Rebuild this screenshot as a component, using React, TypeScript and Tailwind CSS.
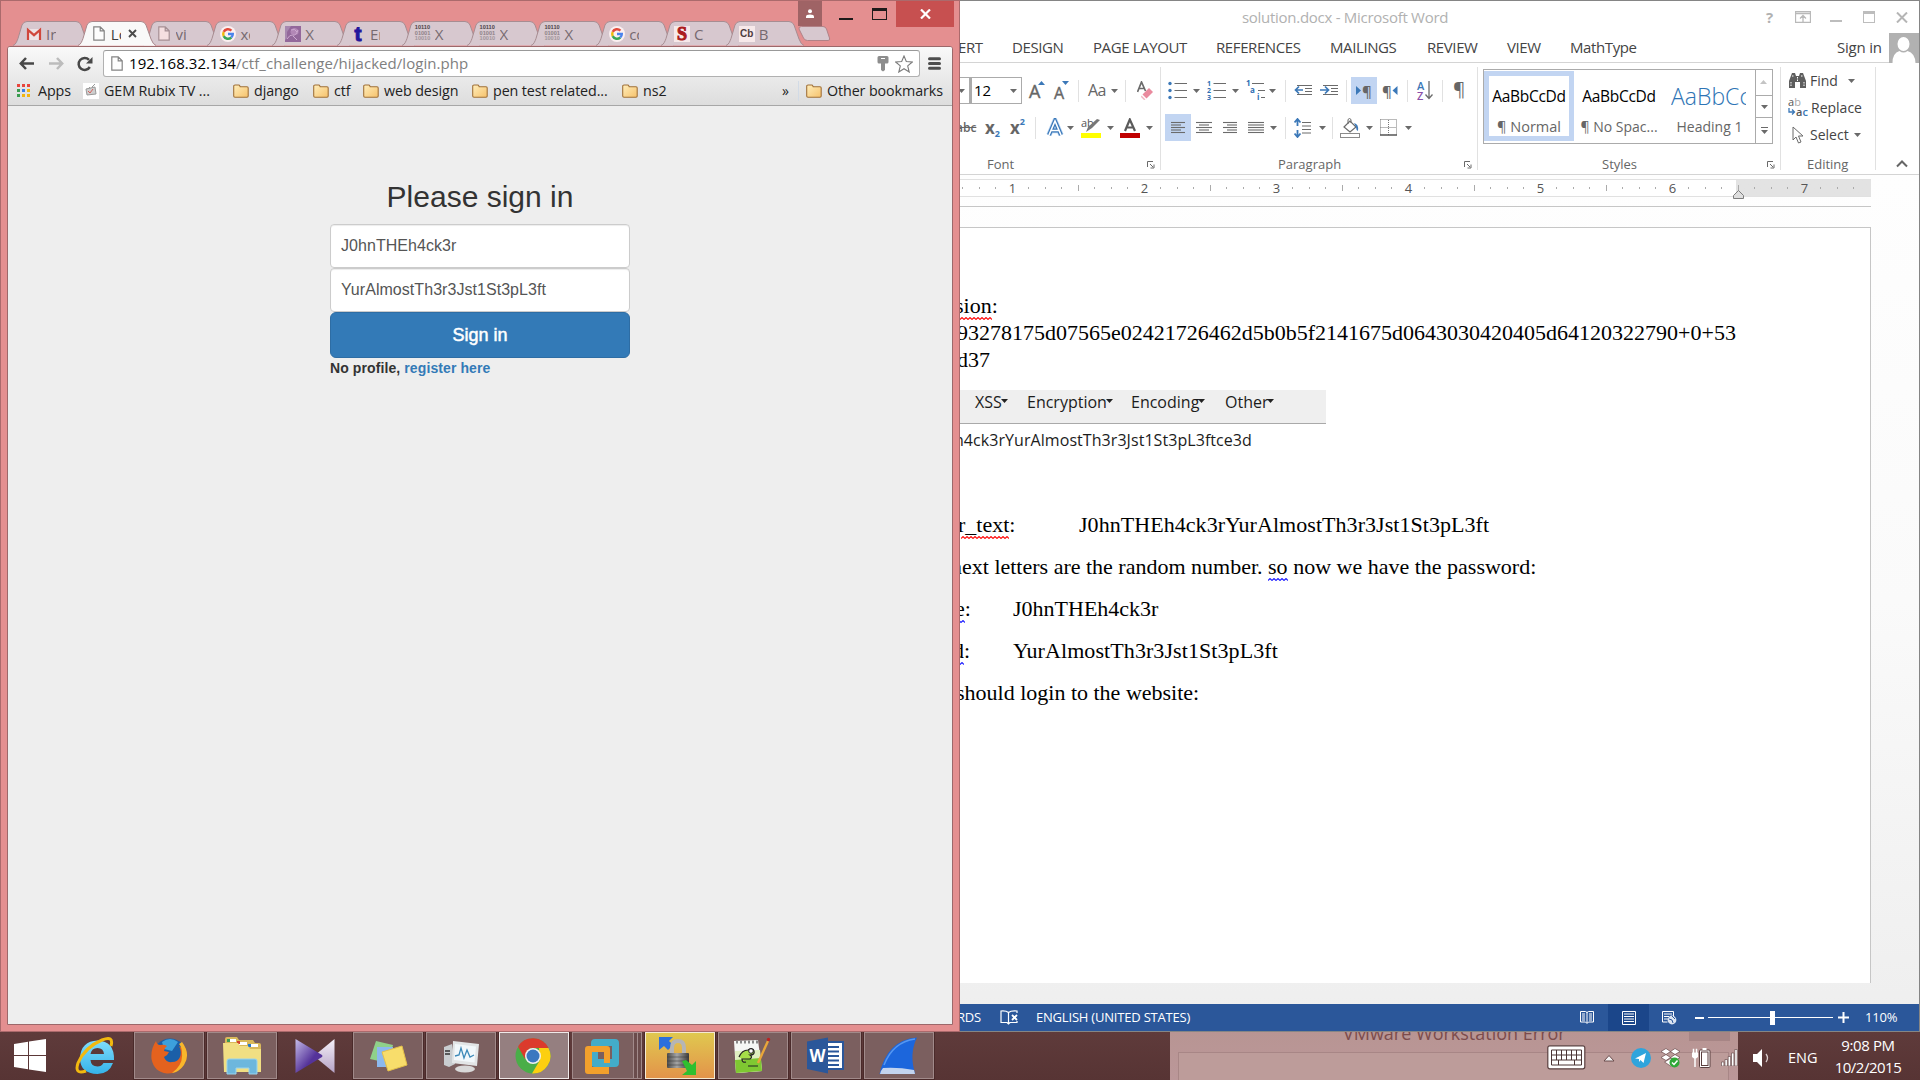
import React from "react";

type Kids = { children?: React.ReactNode };

const Folder = () => (
  <svg width="16" height="14" viewBox="0 0 16 14">
    <defs>
      <linearGradient id="fold" x1="0" y1="0" x2="1" y2="1">
        <stop offset="0" stopColor="#ffeebb" />
        <stop offset="1" stopColor="#f6c26c" />
      </linearGradient>
    </defs>
    <path d="M.7 12V2.2Q.7 1 2 1h3.6q1 0 1.3 1l.3.8H14q1.2 0 1.2 1.2v8q0 1.200-1.200 1.200H2Q.7 13.200.7 12z" fill="url(#fold)" stroke="#a0713a" strokeWidth="1.100" />
  </svg>
);

const Doc = ({ pink }: { pink?: boolean }) => (
  <svg width="12" height="15" viewBox="0 0 12 15">
    <path d="M.8.8h6.400l4 4v9.400H.8zM7.200.8v4h4" fill={pink ? "#f5dfe0" : "#fdfdfd"} stroke={pink ? "#a58f94" : "#848484"} strokeWidth="1.200" />
  </svg>
);

const Google = () => (
  <svg width="16" height="16" viewBox="0 0 16 16">
    <circle cx="8" cy="8" r="8" fill="#fbf0f1" />
    <g fill="none" strokeWidth="2.400">
      <path d="M11.400 4.600A4.800 4.800 0 0 0 3.700 5.900" stroke="#e24a3b" />
      <path d="M3.700 5.900a4.800 4.800 0 0 0 0 4.200" stroke="#f0b90b" />
      <path d="M3.700 10.100a4.800 4.800 0 0 0 7.600 1.400" stroke="#3aa657" />
      <path d="M11.300 11.500A4.800 4.800 0 0 0 12.800 8H8" stroke="#4a83ec" />
    </g>
  </svg>
);

const Gmail = () => (
  <svg width="16" height="16" viewBox="0 0 16 16">
    <rect x="1" y="3" width="14" height="11" rx="1" fill="#eee3e6" />
    <path d="M2 14V4l6 5.200L14 4v10" fill="none" stroke="#d0473c" strokeWidth="2.200" />
  </svg>
);

const Binary = () => (
  <span className="block w-4 font-['Liberation_Sans',sans-serif] text-[5.600px] font-bold leading-[5.500px]">
    <span className="block text-[#4c4448]">10110</span>
    <span className="block text-[#8d8287]">01001</span>
    <span className="block text-[#a1969b]">10010</span>
  </span>
);

const Flower = () => (
  <svg width="16" height="16" viewBox="0 0 16 16">
    <rect width="16" height="16" fill="#93689b" />
    <path d="M9 2q4 0 4.500 3.500T9 9Q5 8.500 5.500 5.500T9 2z" fill="#b287b6" />
    <path d="M0 0h6L2 6v6l-2 2z" fill="#a788af" />
    <path d="M2 13Q5 8 8 9t5-5M6 4q4-2 6 2M8 10l4 4" stroke="#cda9d0" fill="none" />
  </svg>
);

const LetterT = () => <span className="block w-4 text-center font-['Liberation_Sans',sans-serif] text-[21px] font-bold leading-4 text-[#24169c] [-webkit-text-stroke:1px_#24169c]">t</span>;
const LetterS = () => <span className="block h-4 w-4 bg-[#f7e9ea] text-center font-['Liberation_Serif',serif] text-[18px] font-bold leading-4 text-[#ab1c20] [-webkit-text-stroke:1px_#ab1c20]">S</span>;
const LetterCb = () => <span className="block h-4 w-4 bg-[#f7e9ea] text-center font-['Liberation_Sans',sans-serif] text-[10px] font-bold leading-4 text-[#4d3b3d]">Cb</span>;

const tabs: { icon: React.ReactNode; label: string; active?: boolean }[] = [
  { icon: <Gmail />, label: "Ir" },
  { icon: <Doc />, label: "Lo", active: true },
  { icon: <Doc pink />, label: "vi" },
  { icon: <Google />, label: "xc" },
  { icon: <Flower />, label: "X" },
  { icon: <LetterT />, label: "En" },
  { icon: <Binary />, label: "X" },
  { icon: <Binary />, label: "X" },
  { icon: <Binary />, label: "X" },
  { icon: <Google />, label: "cc" },
  { icon: <LetterS />, label: "C" },
  { icon: <LetterCb />, label: "Br" },
];

function TabStrip() {
  return (
    <div className="flex h-[25px] pl-3">
      {tabs.map((t, i) => (
        <div key={i} className={"relative flex h-[25px] w-[64.800px] shrink-0 items-center " + (t.active ? "z-10" : "")}>
          <svg className="absolute left-0 top-0" width="78" height="25" viewBox="0 0 78 25">
            <path
              d="M0 24.500C3 23.500 4 20 5 17.500L9 4Q10.500.5 14 .5H63Q66.500.5 68 4L73 18Q75 23.500 78 24.500"
              fill={t.active ? "#f9f9f9" : "#d7c8cf"}
              stroke={t.active ? "#a9888c" : "#a78d92"}
            />
            {t.active && <path d="M1 25h76" stroke="#f9f9f9" />}
          </svg>
          <div className="relative ml-[13px] flex w-4 justify-center">{t.icon}</div>
          <div className={"relative ml-1 w-[10px] overflow-hidden whitespace-nowrap text-[15px] leading-5 " + (t.active ? "text-[#3d3d3d]" : "text-[#766a70]")}>{t.label}</div>
          {t.active && (
            <svg className="relative ml-[7px]" width="9" height="9" viewBox="0 0 9 9">
              <path d="M1 1l7 7M8 1L1 8" stroke="#4b4b4b" strokeWidth="1.900" />
            </svg>
          )}
        </div>
      ))}
      <svg className="ml-[7px] mt-[5px]" width="33" height="16" viewBox="0 0 33 16">
        <path d="M3.500.5H25q2.500 0 3.500 2.500l3 9q.8 2.500-1.500 2.500H9.500Q6.500 14.500 5.500 12L1 3Q.5.5 3.500.5z" fill="#d7c8cf" stroke="#b18287" />
      </svg>
    </div>
  );
}

const Bookmark = ({ w, label, icon }: { w: string; label: string; icon?: React.ReactNode }) => (
  <div className={"flex shrink-0 items-center whitespace-nowrap " + w}>
    <span className="flex w-[21px] shrink-0">{icon ?? <Folder />}</span>
    <span className="text-[14.300px] tracking-[-0.100px]">{label}</span>
  </div>
);

const appColors = ["#e8453c", "#e8453c", "#e8453c", "#3a9c4f", "#3c7ee6", "#f2b50f", "#3a9c4f", "#f2b50f", "#f2b50f"];

function ChromeWindow() {
  return (
    <div className="absolute left-0 top-0 z-10 flex h-[1032px] w-[960px] flex-col border border-[#ab6a6c] bg-[#e48f90] font-['Open_Sans',sans-serif]">
      <div className="relative flex h-[45px] flex-col justify-end">
        <TabStrip />
        <div className="absolute right-[5px] top-0 flex items-start">
          <div className="flex h-[25px] w-6 items-center justify-center bg-[#9f6365]">
            <svg width="8" height="9" viewBox="0 0 8 9">
              <circle cx="4" cy="2.200" r="2" fill="#fff" />
              <path d="M0 9V7.500Q0 5.500 4 5.500t4 2V9z" fill="#fff" />
            </svg>
          </div>
          <div className="mt-[17px] ml-[17px] h-0.5 w-[14px] bg-[#1e1a1a]" />
          <div className="mt-[7px] ml-[19px] h-3 w-[15px] border border-t-[3px] border-[#1e1a1a]" />
          <div className="ml-[9px] flex h-[26px] w-[58px] items-center justify-center bg-[#c75050]">
            <svg width="11" height="10" viewBox="0 0 11 10">
              <path d="M1 .5l9 9M10 .5l-9 9" stroke="#fff" strokeWidth="2.200" />
            </svg>
          </div>
        </div>
      </div>
      <div className="mx-[6px] mb-[6px] flex grow flex-col overflow-hidden rounded-t-[3px] border border-[#9c686a] bg-[#eeeeee]">
        <div className="flex h-[59px] flex-col border-b border-[#a7a7a7] bg-linear-to-b from-[#f9f9f9] to-[#dddddd]">
          <div className="flex h-[33px] shrink-0 items-center pl-[11px]">
            <svg width="16" height="13" viewBox="0 0 16 13">
              <path d="M7 1L1.800 6.500 7 12M2.500 6.500H15" fill="none" stroke="#484848" strokeWidth="2.500" />
            </svg>
            <svg className="ml-[13px]" width="16" height="13" viewBox="0 0 16 13">
              <path d="M9 1l5.200 5.500L9 12M13.500 6.500H1" fill="none" stroke="#bcbcbc" strokeWidth="2.500" />
            </svg>
            <svg className="ml-[13px]" width="16" height="16" viewBox="0 0 16 16">
              <path d="M12.800 11A6 6 0 1 1 12 3.800" fill="none" stroke="#484848" strokeWidth="2.500" />
              <path d="M15.500 1v6.500H9z" fill="#484848" />
            </svg>
            <div className="ml-[10px] flex h-[27px] w-[817px] items-center rounded-[3px] border border-[#b1b1b1] border-t-[#999999] bg-white">
              <span className="ml-[7px] flex"><Doc /></span>
              <span className="-mt-px ml-[6px] w-[748px] text-[15px] leading-5 tracking-[0.060px] text-[#808080]">
                <span className="text-black">192.168.32.134</span>/ctf_challenge/hijacked/login.php
              </span>
              <svg width="12" height="16" viewBox="0 0 12 16">
                <path d="M2 0h8q1.500 0 1.500 1.500V6Q11.500 7.500 10 7.500H8V14l-2 1.500L4 14V7.500H2Q.5 7.500.5 6V1.500Q.5 0 2 0z" fill="#8d8d8d" />
                <path d="M4 2.500h4" stroke="#fff" />
              </svg>
              <svg className="ml-[6px]" width="18" height="18" viewBox="0 0 18 18">
                <path d="M9 1l2.300 5.500 6 .5-4.600 3.900L14.200 17 9 13.700 3.800 17l1.500-6.100L.7 7l6-.5z" fill="none" stroke="#7b7b7b" strokeWidth="1.100" />
              </svg>
            </div>
            <svg className="ml-[8px]" width="13" height="13" viewBox="0 0 13 13">
              <path d="M1.500 1.800h10M1.500 6.500h10M1.500 11.200h10" stroke="#4e4e4e" strokeWidth="3" strokeLinecap="round" />
            </svg>
          </div>
          <div className="flex h-[21px] items-center pl-[9px] text-[14px] leading-5 text-[#222222]">
            <Bookmark
              w="w-[66px]"
              label="Apps"
              icon={
                <span className="grid grid-cols-3 gap-0.5">
                  {appColors.map((c, i) => (
                    <span key={i} className="h-[3px] w-[3px]" style={{ backgroundColor: c }} />
                  ))}
                </span>
              }
            />
            <Bookmark
              w="w-[150px]"
              label="GEM Rubix TV ..."
              icon={
                <svg width="16" height="16" viewBox="0 0 16 16">
                  <rect width="16" height="16" fill="#fff" />
                  <path d="M3 6l9-2 1 7-9 1zM6 4l1 1M12 1L9 4" fill="#cfcfcf" stroke="#999" />
                  <path d="M5 8l2 2 3-4" stroke="#d4605c" fill="none" />
                </svg>
              }
            />
            <Bookmark w="w-[80px]" label="django" />
            <Bookmark w="w-[50px]" label="ctf" />
            <Bookmark w="w-[109px]" label="web design" />
            <Bookmark w="w-[150px]" label="pen test related..." />
            <Bookmark w="w-[160px]" label="ns2" />
            <span className="w-4 text-[14px] leading-4">»</span>
            <span className="mr-[7px] h-5 w-px bg-[#d2dbe6]" />
            <Bookmark w="w-[140px]" label="Other bookmarks" />
          </div>
        </div>
        <div className="flex flex-col items-center pt-[74px] font-['Liberation_Sans',Arial,sans-serif] text-[#333333]">
          <form className="flex w-[300px] flex-col">
            <h2 className="mb-[11px] text-center text-[30px] leading-[33px]">Please sign in</h2>
            <div className="flex h-11 items-center rounded border border-[#cccccc] bg-white pl-[10px] text-[16px] tracking-[0.050px] text-[#555555] shadow-[inset_0_1px_1px_rgba(0,0,0,0.075)]">J0hnTHEh4ck3r</div>
            <div className="flex h-11 items-center rounded border border-[#cccccc] bg-white pl-[10px] text-[16px] tracking-[0.050px] text-[#555555] shadow-[inset_0_1px_1px_rgba(0,0,0,0.075)]">YurAlmostTh3r3Jst1St3pL3ft</div>
            <button type="button" className="h-[46px] rounded-md border border-[#2e6da4] bg-[#337ab7] text-[18px] text-white [-webkit-text-stroke:0.500px_white]">Sign in</button>
            <p className="text-[14px] font-bold leading-5 tracking-[0.100px]">
              No profile, <span className="text-[#337ab7]">register here</span>
            </p>
          </form>
        </div>
      </div>
    </div>
  );
}

const Caret = ({ c = "#6a6a6a" }: { c?: string }) => (
  <svg width="7" height="4" viewBox="0 0 7 4" className="shrink-0">
    <path d="M0 0h7L3.500 4z" fill={c} />
  </svg>
);
const Sep = () => <span className="h-[22px] w-px shrink-0 bg-[#e1e1e1]" />;
const Cell = ({ w, children }: Kids & { w: string }) => <span className={"flex h-[27px] shrink-0 items-center " + w}>{children}</span>;

const Lines = ({ rows }: { rows: [number, number][] }) => (
  <svg width="18" height="14" viewBox="0 0 18 14">
    {rows.map(([a, b], i) => (
      <path key={i} d={`M${a} ${1.5 + i * 2.5}H${b}`} stroke="#6b6b6b" strokeWidth="1.100" />
    ))}
  </svg>
);

const BulletIcon = () => (
  <svg width="20" height="19" viewBox="0 0 20 19">
    <path d="M6.500 2.500H19M6.500 9.500H19M6.500 16.500H19" stroke="#6b6b6b" strokeWidth="1.100" />
    <g fill="#3b78b8"><circle cx="2" cy="2.500" r="1.700" /><circle cx="2" cy="9.500" r="1.700" /><circle cx="2" cy="16.500" r="1.700" /></g>
  </svg>
);
const NumberIcon = () => (
  <svg width="20" height="21" viewBox="0 0 20 21">
    <path d="M6.500 3.500H19M6.500 10.500H19M6.500 17.500H19" stroke="#6b6b6b" strokeWidth="1.100" />
    <g fill="#2f6fb3" fontSize="7" fontWeight="700" fontFamily="Open Sans"><text x="0" y="6">1</text><text x="0" y="13">2</text><text x="0" y="20">3</text></g>
  </svg>
);
const MultiIcon = () => (
  <svg width="20" height="21" viewBox="0 0 20 21">
    <path d="M6 3.500H18M12 10.500H19M15 17.500H19" stroke="#6b6b6b" strokeWidth="1.100" />
    <g fill="#2f6fb3" fontSize="8" fontWeight="700" fontFamily="Open Sans"><text x="0" y="6">1</text><text x="4" y="13">a</text><text x="11" y="20">i</text></g>
  </svg>
);
const Indent = ({ out }: { out?: boolean }) => (
  <svg width="19" height="13" viewBox="0 0 19 13">
    <path d="M3 1.500h15M11 4.500h7M11 7.500h7M3 10.500h15" stroke="#6b6b6b" strokeWidth="1.100" />
    <path d={out ? "M9 6H1.500M5 2.500L1.500 6 5 9.500" : "M0 6h8M5 2.500L8.500 6 5 9.500"} fill="none" stroke="#3b78b8" strokeWidth="1.700" />
  </svg>
);

const Launcher = () => (
  <svg width="8" height="8" viewBox="0 0 8 8" className="shrink-0">
    <path d="M.5 6V.5H6M3 3l3 3M7 3.500V7H3.500" fill="none" stroke="#6a6a6a" />
  </svg>
);

function FontGroup() {
  return (
    <div className="flex w-[220px] shrink-0 flex-col">
      <div className="mt-[14px] flex h-[27px] items-center">
        <span className="flex h-[27px] w-[30px] items-center justify-end border border-[#ababab] pr-1"><Caret /></span>
        <span className="flex h-[27px] w-[52px] items-center border border-l-2 border-[#ababab] pl-[2px] text-[15px] text-black">
          <span className="w-[36px]">12</span><Caret />
        </span>
        <Cell w="w-[25px] pl-[7px]"><span className="text-[18px] leading-5 [-webkit-text-stroke:0.400px_#666]">A</span><span className="-mt-4 -ml-0.5 rotate-180"><Caret c="#3b78b8" /></span></Cell>
        <Cell w="w-[31px] pl-[7px]"><span className="pt-1 text-[16px] leading-5 [-webkit-text-stroke:0.400px_#666]">A</span><span className="-mt-4 -ml-0.5"><Caret c="#3b78b8" /></span></Cell>
        <Sep />
        <Cell w="w-[46px] pl-[9px]"><span className="w-[23px] text-[16px] leading-5 tracking-[-0.500px] -mt-px">Aa</span><Caret /></Cell>
        <Sep />
        <Cell w="w-[30px] pl-[11px]">
          <svg width="17" height="20" viewBox="0 0 17 20">
            <path d="M.5 11L4.500 1l4 9M2 7.500h5" fill="none" stroke="#6b6b6b" strokeWidth="1.700" />
            <path d="M12 7l4 4-6.500 6.500-4-4z" fill="#ea8a9e" /><path d="M4.500 14.500l4 4-1.500.5-3-3z" fill="#f1b2bf" />
          </svg>
        </Cell>
      </div>
      <div className="mt-[10px] flex h-[27px] items-center">
        <Cell w="w-[45px] pl-[16px]"><span className="text-[12px] font-semibold leading-4 line-through">abc</span></Cell>
        <Cell w="w-[25px]"><span className="text-[17px] font-bold leading-4">x</span><span className="mt-3 text-[9px] font-bold leading-3 text-[#3b78b8]">2</span></Cell>
        <Cell w="w-[25px]"><span className="text-[17px] font-bold leading-4">x</span><span className="-mt-3 text-[9px] font-bold leading-3 text-[#3b78b8]">2</span></Cell>
        <Sep />
        <Cell w="w-[45px] pl-[10px]">
          <span className="flex w-[21px]">
            <svg width="18" height="20" viewBox="0 0 18 20"><path d="M3 17L9 3l6 14M5.500 12.500h7" fill="none" stroke="#b9d5f2" strokeWidth="5.500" /><path d="M3 17L9 3l6 14M5.500 12.500h7" fill="none" stroke="#3b78b8" strokeWidth="4" /><path d="M3 17L9 3l6 14M5.500 12.500h7" fill="none" stroke="#fff" strokeWidth="1.600" /></svg>
          </span>
          <Caret />
        </Cell>
        <Cell w="w-[39px]">
          <svg width="21" height="20" viewBox="0 0 21 20">
            <text x="0" y="8.500" fontSize="11" fill="#555" fontFamily="Open Sans">ab</text>
            <path d="M19 2L11 10l-6 4 2-5 9-8z" fill="#777" /><rect y="15" width="20" height="5" fill="#ff0" />
          </svg>
          <span className="ml-[5px] flex"><Caret /></span>
        </Cell>
        <Cell w="w-[38px]">
          <svg width="20" height="20" viewBox="0 0 20 20">
            <path d="M5 13L9.800 1.500 15 13M6.500 9.500h7" fill="none" stroke="#5b5b5b" strokeWidth="2.200" /><rect y="15" width="20" height="5" fill="#c00000" />
          </svg>
          <span className="ml-[6px] flex"><Caret /></span>
        </Cell>
      </div>
      <div className="mt-[13px] flex h-5 items-center pt-[2px] pl-[47px] text-[13px]"><span className="w-[160px]">Font</span><Launcher /></div>
    </div>
  );
}

function ParagraphGroup() {
  return (
    <div className="flex w-[316px] shrink-0 flex-col pl-1">
      <div className="mt-[14px] flex h-[27px] items-center">
        <Cell w="w-[39px] pl-[3px]"><BulletIcon /><span className="ml-[5px] flex"><Caret /></span></Cell>
        <Cell w="w-[39px] pl-[3px]"><NumberIcon /><span className="ml-[5px] flex"><Caret /></span></Cell>
        <Cell w="w-[42px] pl-[3px]"><MultiIcon /><span className="ml-[3px] flex"><Caret /></span></Cell>
        <Sep />
        <Cell w="w-[34px] pl-2"><Indent out /></Cell>
        <Cell w="w-[26px]"><Indent /></Cell>
        <Sep />
        <Cell w="ml-1 w-[26px] justify-center bg-[#c2d5f2]"><svg width="6" height="9" viewBox="0 0 6 9"><path d="M0 0l5 4.500L0 9z" fill="#3b78b8" /></svg><span className="text-[15px] font-semibold leading-4">¶</span></Cell>
        <Cell w="w-[30px] pl-[5px]"><span className="text-[15px] font-semibold leading-4">¶</span><svg width="6" height="9" viewBox="0 0 6 9"><path d="M5.500 0l-5 4.500 5 4.500z" fill="#3b78b8" /></svg></Cell>
        <Sep />
        <Cell w="w-[34px] pl-[9px]">
          <span className="flex flex-col text-[11px] font-semibold leading-[10px]"><span className="text-[#3b78b8]">A</span><span className="text-[#8a4fa8]">Z</span></span>
          <svg className="ml-px" width="8" height="19" viewBox="0 0 8 19"><path d="M4 0v17M.5 13.500L4 17.500l3.500-4" fill="none" stroke="#6b6b6b" strokeWidth="1.300" /></svg>
        </Cell>
        <Sep />
        <Cell w="pl-[10px]"><span className="-mt-1 text-[19px] leading-5">¶</span></Cell>
      </div>
      <div className="mt-[10px] flex h-[27px] items-center">
        <Cell w="w-[26px] pl-[6px] bg-[#c2d5f2]"><Lines rows={[[0, 14], [0, 10], [0, 14], [0, 10], [0, 14]]} /></Cell>
        <Cell w="w-[32px] pl-[5px]"><Lines rows={[[0, 16], [3, 13], [0, 16], [3, 13], [0, 16]]} /></Cell>
        <Cell w="w-[25px]"><Lines rows={[[0, 14], [4, 14], [0, 14], [4, 14], [0, 14]]} /></Cell>
        <Cell w="w-[37px]"><Lines rows={[[0, 16], [0, 16], [0, 16], [0, 16], [0, 16]]} /><span className="ml-1 flex"><Caret /></span></Cell>
        <Sep />
        <Cell w="w-[46px] pl-2">
          <svg width="18" height="20" viewBox="0 0 18 20"><path d="M3.500 2v6M3.500 12v6M.5 4.500l3-3.500 3 3.500M.5 15.500l3 3.500 3-3.500" fill="none" stroke="#3b78b8" strokeWidth="1.800" /><path d="M8 4.500h9M8 8h9M8 11.500h9M8 15h9" stroke="#6b6b6b" /></svg>
          <span className="ml-[7px] flex"><Caret /></span>
        </Cell>
        <Sep />
        <Cell w="w-[46px] pl-[7px]">
          <svg width="20" height="20" viewBox="0 0 20 20"><path d="M4 9l6-6 6 6-6 5z" fill="#fff" stroke="#6b6b6b" strokeWidth="1.200" /><path d="M8 6V1.500q1.500-2 3 0V5" fill="none" stroke="#6b6b6b" /><path d="M14 5q5 1 4 8-2-1-2-4z" fill="#3b78b8" /><rect x=".5" y="15.500" width="19" height="4" fill="#fff" stroke="#8b8b8b" /></svg>
          <span className="ml-[6px] flex"><Caret /></span>
        </Cell>
        <Cell w="pl-px">
          <svg width="17" height="17" viewBox="0 0 17 17"><path d="M.5.5h16v15M.5.5v15M8.500 1v15M.5 8.500h16" fill="none" stroke="#777" strokeDasharray="1 1" /><path d="M0 16h17" stroke="#555" strokeWidth="1.500" /></svg>
          <span className="ml-[8px] flex"><Caret /></span>
        </Cell>
      </div>
      <div className="mt-[13px] flex h-5 items-center pt-[2px] pl-[113px] text-[13px]"><span className="w-[186px]">Paragraph</span><Launcher /></div>
    </div>
  );
}

function StylesGroup() {
  return (
    <div className="flex w-[302px] shrink-0 flex-col pl-[5px]">
      <div className="mt-[6px] flex h-[75px] w-[290px] border border-[#ababab] bg-white">
        <div className="mt-px flex h-[70px] w-[90px] shrink-0 flex-col items-center border-[5px] border-[#c2d5f2]">
          <span className="mt-[9px] text-[15.500px] leading-[22px] tracking-[-0.300px] text-black">AaBbCcDd</span>
          <span className="mt-[10px] whitespace-nowrap text-[14.500px] leading-5">¶ Normal</span>
        </div>
        <div className="flex w-[90px] shrink-0 flex-col items-center pt-[15px]">
          <span className="text-[15.500px] leading-[22px] tracking-[-0.300px] text-black">AaBbCcDd</span>
          <span className="mt-[10px] whitespace-nowrap text-[14px] leading-5">¶ No Spac...</span>
        </div>
        <div className="flex w-[91px] shrink-0 flex-col items-center pt-[14px]">
          <span className="-ml-0.5 w-[75px] overflow-hidden whitespace-nowrap text-[23px] font-light leading-[24px] text-[#2e74b5]">AaBbCc</span>
          <span className="mt-[9px] whitespace-nowrap text-[14px] leading-5">Heading 1</span>
        </div>
        <div className="flex w-[17px] flex-col border-l border-[#ababab]">
          <span className="flex h-[25px] rotate-180 items-center justify-center"><Caret c="#c4c4c4" /></span>
          <span className="flex h-[23px] items-center justify-center border-y border-[#ababab]"><Caret /></span>
          <span className="flex h-[25px] flex-col items-center justify-center gap-[2px]"><span className="h-px w-[7px] bg-[#6a6a6a]" /><Caret /></span>
        </div>
      </div>
      <div className="mt-[10px] flex h-5 items-center pt-[2px] pl-[119px] text-[13px]"><span className="w-[165px]">Styles</span><Launcher /></div>
    </div>
  );
}

function EditingGroup() {
  return (
    <div className="flex w-[94px] shrink-0 flex-col pl-[7px] text-[14px] text-[#444444]">
      <div className="mt-[4px] flex h-[27px] shrink-0 items-center">
        <svg width="19" height="17" viewBox="0 0 19 17"><path d="M1 9l3-8h3l1 3h3l1-3h3l3 8v7h-6v-6H7v6H1z" fill="#5e5e5e" /><path d="M4 4h2M13 4h2M3 10v5M16 10v5M9.500 5v4" stroke="#fff" strokeDasharray="1.500 1" /></svg>
        <span className="ml-[3px] w-[38px]">Find</span><Caret />
      </div>
      <div className="flex h-[27px] shrink-0 items-center">
        <svg width="20" height="20" viewBox="0 0 20 20"><text x="0" y="8" fontSize="11" fontFamily="Open Sans" fill="#555">a<tspan fill="#aaa">b</tspan></text><text x="8" y="18" fontSize="11" fontFamily="Open Sans" fontWeight="600" fill="#555">a<tspan fill="#3b78b8">c</tspan></text><path d="M1 10v4h5M4 11.500L6.500 14 4 16.500" fill="none" stroke="#3b78b8" strokeWidth="1.300" /></svg>
        <span className="ml-[3px]">Replace</span>
      </div>
      <div className="flex h-[27px] shrink-0 items-center">
        <svg className="ml-1" width="12" height="18" viewBox="0 0 12 18"><path d="M1 1v13l3-3 2.500 6 2.500-1-2.500-6H11z" fill="#fff" stroke="#6b6b6b" /></svg>
        <span className="ml-[6px] w-[44px]">Select</span><Caret />
      </div>
      <div className="mt-[6px] flex h-5 items-center pt-[2px] pl-[19px] text-[13px] text-[#666666]">Editing</div>
    </div>
  );
}

const menu: [string, string][] = [
  ["w-[54px]", "ERT"], ["w-[81px]", "DESIGN"], ["w-[123px]", "PAGE LAYOUT"], ["w-[114px]", "REFERENCES"], ["w-[97px]", "MAILINGS"], ["w-[80px]", "REVIEW"], ["w-[63px]", "VIEW"], ["w-[267px]", "MathType"],
];

const Ruler = () => (
  <div className="relative mt-1 flex h-[18px] w-[931px] shrink-0 items-center border-y border-[#e1e1e1] bg-linear-to-r from-white from-[796px] to-[#e3e3e3] to-[796px] pl-[14.700px]">
    {Array.from({ length: 55 }, (_, i) => {
      const k = (i + 5) % 8;
      return (
        <span key={i} className="flex w-[16.500px] shrink-0 items-center justify-center text-[13px] leading-4 text-[#555555]">
          {k === 0 ? Math.round((i + 5) / 8) : <span className={k === 4 ? "h-[6px] w-px bg-[#ababab]" : "h-0.5 w-px bg-[#ababab]"} />}
        </span>
      );
    })}
    <svg className="absolute left-[793px] top-[10px]" width="11" height="9" viewBox="0 0 11 9"><path d="M.5 8.500v-3l5-5 5 5v3z" fill="#dedede" stroke="#7d7d7d" /></svg>
  </div>
);

const Squiggle = ({ color, n, children }: Kids & { color: string; n: number }) => (
  <span className="relative inline-block">
    {children}
    <svg className="absolute right-0 bottom-0 -mb-px" width={n * 4} height="3" viewBox={`0 0 ${n * 4} 3`}>
      <path d={"M0 2.500" + "l2-2 2 2".repeat(n)} fill="none" stroke={color} strokeWidth="1.100" />
    </svg>
  </span>
);

function DocPage() {
  return (
    <div className="mt-5 flex h-[756px] w-[931px] shrink-0 flex-col whitespace-nowrap border-t border-r border-[#c6c6c6] bg-white pt-[64px] font-['Liberation_Serif','Times_New_Roman',serif] text-[22px] leading-[27px] text-black">
      <p className="pl-[15px]"><Squiggle color="#f11" n={9}>sion</Squiggle>:</p>
      <p className="pl-[17px]">93278175d07565e02421726462d5b0b5f2141675d0643030420405d64120322790+0+53</p>
      <p className="pl-[17px]">d37</p>
      <div className="mt-[17px] flex h-[121px] w-[386px] flex-col font-['Open_Sans',sans-serif] text-[16px] text-[#1c1c1c]">
        <div className="flex h-[34px] items-start border-b border-[#a9a9a9] bg-[#efefef] pl-[35px] leading-6 tracking-[0px]">
          {[["w-[52px]", "XSS"], ["w-[104px]", "Encryption"], ["w-[94px]", "Encoding"], ["w-[60px]", "Other"]].map(([w, l]) => (
            <span key={l} className={"flex items-center " + w}>{l}<span className="-mt-0.5 -ml-px flex"><Caret c="#222" /></span></span>
          ))}
        </div>
        <div className="pt-1 pl-[14px] leading-6 tracking-[0.060px]">h4ck3rYurAlmostTh3r3Jst1St3pL3ftce3d</div>
      </div>
      <div className="flex flex-col gap-[15px]">
        <p className="flex pl-[18px]"><span className="w-[121px]"><Squiggle color="#f11" n={12}>r_text</Squiggle>:</span><span className="tracking-[0.050px]">J0hnTHEh4ck3rYurAlmostTh3r3Jst1St3pL3ft</span></p>
        <p className="pl-[11px]">next letters are the random number. <Squiggle color="#22f" n={5}>so</Squiggle> now we have the password:</p>
        <p className="flex pl-[15px]"><span className="w-[58px]"><Squiggle color="#22f" n={2}>e</Squiggle>:</span>J0hnTHEh4ck3r</p>
        <p className="flex pl-[13px]"><span className="w-[60px]"><Squiggle color="#22f" n={2}>d</Squiggle>:</span><span className="tracking-[0.080px]">YurAlmostTh3r3Jst1St3pL3ft</span></p>
        <p className="pl-[16px]">should login to the website:</p>
      </div>
    </div>
  );
}

function StatusBar() {
  return (
    <div className="mt-auto flex h-[27px] shrink-0 items-center bg-[#2b579a] pl-[17px] text-[13px] text-white">
      <span className="w-[43px] tracking-[-0.200px]">RDS</span>
      <svg width="18" height="16" viewBox="0 0 18 16"><path d="M8.500 2.500Q6 .5 1 1v11.500h6l1.500 1.500L10 12.500h7V11M8.500 2.500V14M8.500 2.500Q11 .5 17 1v2" fill="none" stroke="#fff" strokeWidth="1.200" /><path d="M12 5l5 5M17 5l-5 5" stroke="#fff" strokeWidth="1.800" /></svg>
      <span className="ml-[18px] w-[541px] tracking-[-0.200px]">ENGLISH (UNITED STATES)</span>
      <svg className="ml-[3px]" width="14" height="13" viewBox="0 0 14 13"><path d="M.5.5h5l1.500 1 1.500-1h5V11h-5L7 12.500 5.500 11h-5zM7 1v11M2 3h3M2 5h3M2 7h3M2 9h3M9 3h3M9 5h3M9 7h3M9 9h3" fill="none" stroke="#fff" /></svg>
      <span className="ml-[14px] flex h-[27px] w-[41px] items-center justify-center bg-[#1b468a]">
        <svg width="14" height="14" viewBox="0 0 14 14"><path d="M.5.5h13v13H.5zM2 3h10M2 5.500h10M2 8h10M2 10.500h10" fill="none" stroke="#fff" /></svg>
      </span>
      <svg className="ml-[13px]" width="15" height="14" viewBox="0 0 15 14"><path d="M.5 11V.5h11V5M.5 11h5M2 3h8M2 5.500h5M2 8h4" fill="none" stroke="#fff" /><circle cx="10" cy="9" r="4.400" fill="#dbe4f2" /><path d="M7 8l3 1 1 3M10 5l3 3" stroke="#2b579a" fill="none" /></svg>
      <span className="ml-[18px] h-0.5 w-[9px] bg-white" />
      <span className="ml-1 flex w-[125px] items-center"><span className="h-px w-[62px] bg-white" /><span className="h-[14px] w-[5px] bg-white" /><span className="h-px w-[58px] bg-white" /></span>
      <svg className="ml-[5px]" width="11" height="11" viewBox="0 0 11 11"><path d="M0 5.500h11M5.500 0v11" stroke="#fff" strokeWidth="2" /></svg>
      <span className="ml-4 tracking-[-0.200px]">110%</span>
    </div>
  );
}

function WordWindow() {
  return (
    <div className="absolute left-[940px] top-0 flex h-[1032px] w-[980px] flex-col overflow-hidden border-t border-r border-b border-[#858585] bg-white font-['Open_Sans',sans-serif] text-[#666666]">
      <div className="flex h-8 shrink-0 items-center pl-[302px] text-[#b1b1b1]">
        <span className="w-[523px] text-[15px] tracking-[-0.280px]">solution.docx - Microsoft Word</span>
        <span className="w-[30px] pl-px text-[15px] font-bold">?</span>
        <svg width="16" height="12" viewBox="0 0 16 12"><path d="M.5.5h15v11H.5zM.5 2.500h15M8 11V5M5 7.500l3-3 3 3" fill="none" stroke="#b9b9b9" strokeWidth="1.300" /></svg>
        <span className="mt-2 ml-[19px] h-0.5 w-3 bg-[#bdbdbd]" />
        <span className="ml-[21px] h-3 w-3 border border-t-[3px] border-[#bdbdbd]" />
        <svg className="ml-[21px]" width="12" height="11" viewBox="0 0 12 11"><path d="M1 .5l10 10M11 .5l-10 10" stroke="#b5b5b5" strokeWidth="2" /></svg>
      </div>
      <div className="flex h-[30px] shrink-0 items-center border-b border-[#d4d4d4] pl-[18px] text-[15px] tracking-[-0.400px] text-[#444444]">
        {menu.map(([w, l]) => (
          <span key={l} className={"shrink-0 whitespace-nowrap " + w}>{l}</span>
        ))}
        <span className="w-[52px] shrink-0 tracking-[-0.200px]">Sign in</span>
        <svg className="shrink-0" width="30" height="30" viewBox="0 0 30 30"><rect width="30" height="30" fill="#b1b1b1" /><ellipse cx="14.500" cy="11" rx="6" ry="7" fill="#fff" /><path d="M3.500 30q0-10 7-12 4 3 8 0 7.500 2 8 12z" fill="#fff" /></svg>
      </div>
      <div className="flex h-[112px] shrink-0 border-b border-[#d4d4d4]">
        <FontGroup />
        <span className="mt-1 mb-1 w-px bg-[#e1e1e1]" />
        <ParagraphGroup />
        <span className="mt-1 mb-1 w-px bg-[#e1e1e1]" />
        <StylesGroup />
        <span className="mt-1 mb-1 w-px bg-[#e1e1e1]" />
        <EditingGroup />
        <span className="mt-1 mb-1 w-px bg-[#e1e1e1]" />
        <svg className="mt-[97px] ml-[20px]" width="12" height="8" viewBox="0 0 12 8"><path d="M1 6.500l5-5 5 5" fill="none" stroke="#666" strokeWidth="2" /></svg>
      </div>
      <div className="flex grow flex-col bg-linear-to-b from-[#fefefe] via-[#fafafa] to-[#eeeeee]">
        <Ruler />
        <div className="mt-[9px] h-px w-[931px] bg-[#c6c6c6]" />
        <DocPage />
        <StatusBar />
      </div>
    </div>
  );
}

const TaskButton = ({ children, look = "border-[#a18a8a] bg-[#7b5f5f]" }: Kids & { look?: string }) => (
  <div className={"flex h-[47px] w-[70px] shrink-0 items-center justify-center border outline outline-[#4a2a2a] " + look}>{children}</div>
);

const trayIcons = (
  <>
    <svg className="ml-[377px] shrink-0" width="39" height="25" viewBox="0 0 39 25"><rect x=".8" y=".8" width="37" height="23" rx="2" fill="#fff" stroke="#5a4040" strokeWidth="1.200" /><path d="M4.500 5h30v15h-30zM4.500 10h30M4.500 15h30M9.500 5v10M14.500 5v10M19.500 5v10M24.500 5v10M29.500 5v10M11.500 15v5M27.500 15v5" fill="none" stroke="#4a3434" /></svg>
    <svg className="ml-[17px] shrink-0" width="12" height="8" viewBox="0 0 12 8"><path d="M1 7l5-5.500L11 7z" fill="#f4f4f4" stroke="#6b4c4c" /></svg>
    <svg className="ml-[16px] shrink-0" width="20" height="20" viewBox="0 0 20 20"><circle cx="10" cy="10" r="10" fill="#2fa4dc" /><path d="M4 10.500L15 5l-2.500 10-3-3L8 14v-3z" fill="#fff" /></svg>
    <svg className="ml-[9px] shrink-0" width="21" height="20" viewBox="0 0 21 20"><g fill="#fff" stroke="#6b4c4c" strokeWidth=".7"><path d="M6 .5l4.500 3L6 6.500 1 3.500zM15 .5l5 3-5 3-4.500-3zM6 6.500l4.500 3L6 12.500l-5-3zM15 6.500l5 3-5 3-4.500-3zM10.500 10.500l5 3.500-5 4-6-4z" /></g><circle cx="14.500" cy="14.500" r="5" fill="#2fa836" /><path d="M12 14.500l2 2 3.500-4" fill="none" stroke="#fff" strokeWidth="1.500" /></svg>
    <svg className="ml-[10px] shrink-0" width="20" height="20" viewBox="0 0 20 20"><path d="M2.500 5V.8M5.500 5V.8" stroke="#fff" strokeWidth="1.500" /><path d="M1 4.500h6V9L5 10.500h-2L1 9z" fill="#fff" /><path d="M4 10v9" stroke="#fff" strokeWidth="1.500" /><rect x="8.500" y="2" width="10.500" height="17.500" rx="1" fill="#fff" stroke="#5a4040" /><path d="M11.500 0h4v2h-4z" fill="#fff" /><rect x="10.500" y="4" width="6.500" height="13.500" fill="#fff" stroke="#5a4040" /></svg>
    <svg className="ml-[10px] shrink-0" width="17" height="17" viewBox="0 0 17 17"><g fill="#fff" stroke="#5a4040" strokeWidth=".6"><path d="M.5 13h2.400v4H.5zM4 10.500h2.400V17H4zM7.200 7.500h2.400V17H7.200zM10.500 4h2.400v13h-2.400zM13.800.5h2.400V17h-2.400z" /></g></svg>
    <svg className="ml-[14px] shrink-0" width="18" height="20" viewBox="0 0 18 20"><path d="M1 6h4l5-5v18l-5-5H1z" fill="#fff" /><path d="M14 6q3 4 0 8" fill="none" stroke="#d9cccc" strokeWidth="1.300" /></svg>
  </>
);

function Taskbar() {
  return (
    <div className="absolute bottom-0 left-0 flex h-[49px] w-full items-center overflow-hidden bg-linear-to-b from-[#5f3b3b] to-[#573434] font-['Open_Sans',sans-serif]">
      <svg className="ml-[14px] shrink-0" width="32" height="33" viewBox="0 0 32 33"><path d="M0 5l14-2.200V16H0zM15 2.600L32 0v16H15zM0 17h14v13.200L0 28zM15 17h17v16l-17-2.600z" fill="#fff" /></svg>
      <svg className="ml-[29px] shrink-0" width="40" height="40" viewBox="0 0 40 40">
        <defs><linearGradient id="ie" x1="0" y1="0" x2="0" y2="1"><stop offset="0" stopColor="#7fdcfb" /><stop offset="1" stopColor="#35b3ea" /></linearGradient></defs>
        <path d="M39 24H15.500q.5 6.500 7 6.500 4 0 6-3.500h9.500q-4 11-15.500 11Q5 37.500 5 22 6 5 22.500 4.500 39.500 5 39 24zM15.500 18h13.500q-.5-6-6.500-6t-7 6z" fill="url(#ie)" />
        <path d="M36 10q3-11-9-6Q10 11 3 27q-4 12 8 8" fill="none" stroke="#f2b90f" strokeWidth="3" />
      </svg>
      <div className="ml-[19px] flex gap-[3px]">
        <TaskButton>
          <svg width="38" height="38" viewBox="0 0 38 38">
            <circle cx="20" cy="18" r="16.500" fill="#1b5fa8" /><path d="M12 5q8-6 16 0l-6 9-8-2z" fill="#3ca0dc" />
            <path d="M33 7q7 11 1 20-6 10-17 9.500Q4 35 1.500 22 .5 12 6 4q1 4 4 4 4-1 7 1-3 2-3 5l5 1q-1 3-5 5 2 6 8 5 6 0 8-5 2-6-1-11 7 5 4 1z" fill="#e4621e" />
            <path d="M32 5q9 12 2 23-5 7-12 8 11-8 10-19 0-7-3-10z" fill="#f8b62c" />
          </svg>
        </TaskButton>
        <TaskButton>
          <svg width="40" height="39" viewBox="0 0 40 39">
            <path d="M3 3q0-2 2-2h10l2 3h14l2 3h4q2 0 2 2v27H2z" fill="#d9b95b" /><path d="M6 3h8v3H6zM17 6h8v3h-8zM27 8h9v3h-9z" fill="#fff" />
            <path d="M5 3h3v3H5z" fill="#3b9c54" /><path d="M15 5h3v3h-3z" fill="#d5432e" /><path d="M26 8h3v3h-3z" fill="#2a78c8" />
            <path d="M1 7h15l2 3h8l2 3h11v23H2z" fill="#f1df83" /><path d="M5 25q0-2 2-2h26q2 0 2 2v13h-8v-6H14v6H5z" fill="#6db7dd" stroke="#9ad4ee" />
          </svg>
        </TaskButton>
        <div className="flex h-[47px] w-[70px] items-center justify-center">
          <svg width="40" height="36" viewBox="0 0 40 36">
            <defs><linearGradient id="km" x1="0" y1="0" x2="0" y2="1"><stop offset="0" stopColor="#f5f0f8" /><stop offset="1" stopColor="#b5a3c6" /></linearGradient><linearGradient id="kl" x1="0" y1="0" x2="1" y2="1"><stop offset="0" stopColor="#c6bde8" /><stop offset=".6" stopColor="#55339a" /></linearGradient></defs>
            <path d="M39.500 1v34L19 18z" fill="url(#km)" /><path d="M.5 1v34L27 19q1-1 0-2z" fill="url(#kl)" />
          </svg>
        </div>
        <TaskButton>
          <svg width="40" height="34" viewBox="0 0 40 34"><path d="M8 2l17 4-5 18L2 20z" fill="#8fd18a" /><path d="M9 8h16v20H9z" fill="#8cb9ee" /><path d="M14 13l20-6 5 19-19 6z" fill="#f8dd6b" stroke="#e4c04a" /></svg>
        </TaskButton>
        <TaskButton>
          <svg width="38" height="34" viewBox="0 0 38 34"><path d="M2 8l8-3 3 20-6 3-5-2z" fill="#c9cdd0" /><path d="M3 12h5M3 15h5" stroke="#333" strokeWidth="1.500" /><path d="M11 2l26 3-2 22-25-3z" fill="#e2e5e6" /><path d="M13 5l21 2.500-1.500 16L12 21z" fill="#f2f8fb" /><path d="M13 17l4-1 2-7 3 10 3-8 3 7 4-2" fill="none" stroke="#3c89b8" strokeWidth="1.300" /><ellipse cx="23" cy="30" rx="10" ry="3.500" fill="#d9d9d9" /></svg>
        </TaskButton>
        <TaskButton look="border-[#efe9e9] bg-[#957f80]">
          <svg className="-ml-0.5" width="36" height="36" viewBox="0 0 36 36"><circle cx="18" cy="18" r="17.500" fill="#4aae48" /><path d="M3 8.500A17.500 17.500 0 0 1 33.500 10H18z" fill="#dc3a2c" /><path d="M3 8.500L10 21l4-10 4-1.500z" fill="#dc3a2c" /><path d="M33.500 10A17.500 17.500 0 0 1 17 35.500L25 22l-1-12z" fill="#fccf10" /><circle cx="18" cy="18" r="8" fill="#f1f1f1" /><circle cx="18" cy="18" r="6.500" fill="#3b78c0" /></svg>
        </TaskButton>
        <div className="flex w-[70px]">
          <div className="flex h-[47px] w-[62px] items-center justify-center border border-[#a18a8a] bg-[#7b5f5f]">
            <svg className="-ml-0.5" width="36" height="38" viewBox="0 0 36 38"><path d="M11 2h20q4 0 4 4v20q0 4-4 4H11q-4 0-4-4V6q0-4 4-4zM14 9v13h14V9z" fill="#43acc9" fillRule="evenodd" /><path d="M4 9h19q3 0 3 3v14h-6V15H8v15h17v7H4q-3 0-3-3V12q0-3 3-3z" fill="#f3a02c" /></svg>
          </div>
          <div className="h-[47px] w-1 border border-l-0 border-[#a18a8a] bg-[#6a4c4c]" />
          <div className="h-[47px] w-1 border border-l-0 border-[#a18a8a] bg-[#6a4c4c]" />
        </div>
        <TaskButton look="border-[#f5ead2] bg-linear-to-b from-[#dfc84f] to-[#e2934a]">
          <svg className="-ml-1" width="38" height="38" viewBox="0 0 38 38">
            <defs><linearGradient id="lk" x1="0" y1="0" x2="1" y2="0"><stop offset="0" stopColor="#4a4a4a" /><stop offset=".45" stopColor="#a5a5a5" /><stop offset="1" stopColor="#3c3c3c" /></linearGradient></defs>
            <path d="M0 0h14l-4 4 4 4-5 5-4-4-5 4z" fill="#2b6fdc" />
            <path d="M13 18v-7q0-7 6-7t6 7v7" fill="none" stroke="#b5b5b5" strokeWidth="4" />
            <rect x="8" y="16" width="22" height="15" rx="1" fill="url(#lk)" />
            <path d="M8 20h22M8 24h22M8 28h22" stroke="#333" strokeOpacity=".5" />
            <path d="M23 24l4-1 6 5 4-4v14H23l5-4z" fill="#2fbf2f" />
          </svg>
        </TaskButton>
        <TaskButton>
          <svg className="-ml-0.5" width="38" height="38" viewBox="0 0 38 38"><path d="M1 4l24-1 4 31-26 2z" fill="#f5f7f5" /><path d="M2 14l25-1 2 21-26 2z" fill="#dff0c0" /><path d="M2 23l26-2 1 13-26 2z" fill="#7fc832" /><path d="M3 5h22" stroke="#888" strokeWidth="3" strokeDasharray="2 2" /><path d="M6 20q3-7 9-7 5-3 6 1t-4 4q3 2 0 4H9q0 4 4 3M15 29h10" fill="#a5de48" stroke="#222" strokeWidth="1.200" /><circle cx="18" cy="14" r="2.300" fill="#fff" stroke="#222" /><path d="M35 4L25 26" stroke="#e9a63a" strokeWidth="2.400" /><circle cx="35.500" cy="2.500" r="1.700" fill="#b22" /></svg>
        </TaskButton>
        <TaskButton>
          <svg className="-ml-0.5" width="37" height="37" viewBox="0 0 37 37"><rect x="20" y="5" width="16" height="27" fill="#fff" stroke="#2b579a" strokeWidth="2" /><path d="M21 10h11M21 14.500h11M21 19h11M21 23.500h11M21 28h11" stroke="#2b579a" strokeWidth="2" /><path d="M0 4.500L21 .5v36L0 32z" fill="#2b579a" /><text x="2.500" y="25" fontSize="17" fontWeight="700" fontFamily="Open Sans" fill="#fff" textLength="16" lengthAdjust="spacingAndGlyphs">W</text></svg>
        </TaskButton>
        <TaskButton>
          <svg className="-ml-0.5" width="39" height="38" viewBox="0 0 39 38"><path d="M.5 37Q8 3 38 .5q-8 16-2 36z" fill="#1c66dc" /><path d="M5 28Q14 5 36 2" fill="none" stroke="#5597f2" strokeWidth="1.500" /><path d="M1 37q1-4 3-6 15-1 31 2l1 4z" fill="#c3d4ef" /></svg>
        </TaskButton>
      </div>
      <div className="relative ml-[236px] flex h-[49px] shrink-0 items-center self-start">
        <div className="absolute left-0 top-0 h-[49px] w-[568px] overflow-hidden bg-linear-to-b from-[#b89593] to-[#bb9799]">
          <div className="ml-2 mt-[21px] h-10 w-[551px] border border-[#a88686] bg-[#bd9c9a]" />
          <div className="absolute left-[173px] top-[-9px] whitespace-nowrap text-[18px] leading-[22px] text-[#7c4c4c]">VMware Workstation Error</div>
          <div className="absolute left-[519px] top-0 h-[10px] w-[41px] bg-[#a78585]" />
        </div>
        <div className="relative flex items-center pt-1">{trayIcons}</div>
        <span className="relative ml-[18px] w-[40px] pt-1 text-[14.500px] text-white">ENG</span>
        <div className="relative flex w-[80px] flex-col items-center text-[15px] leading-[22px] text-white">
          <span className="tracking-[-0.400px]">9:08 PM</span>
          <span className="tracking-[-0.500px]">10/2/2015</span>
        </div>
      </div>
    </div>
  );
}

export default function App() {
  return (
    <div className="relative h-[1080px] w-[1920px] overflow-hidden bg-[#5b3838]">
      <Taskbar />
      <WordWindow />
      <ChromeWindow />
    </div>
  );
}
